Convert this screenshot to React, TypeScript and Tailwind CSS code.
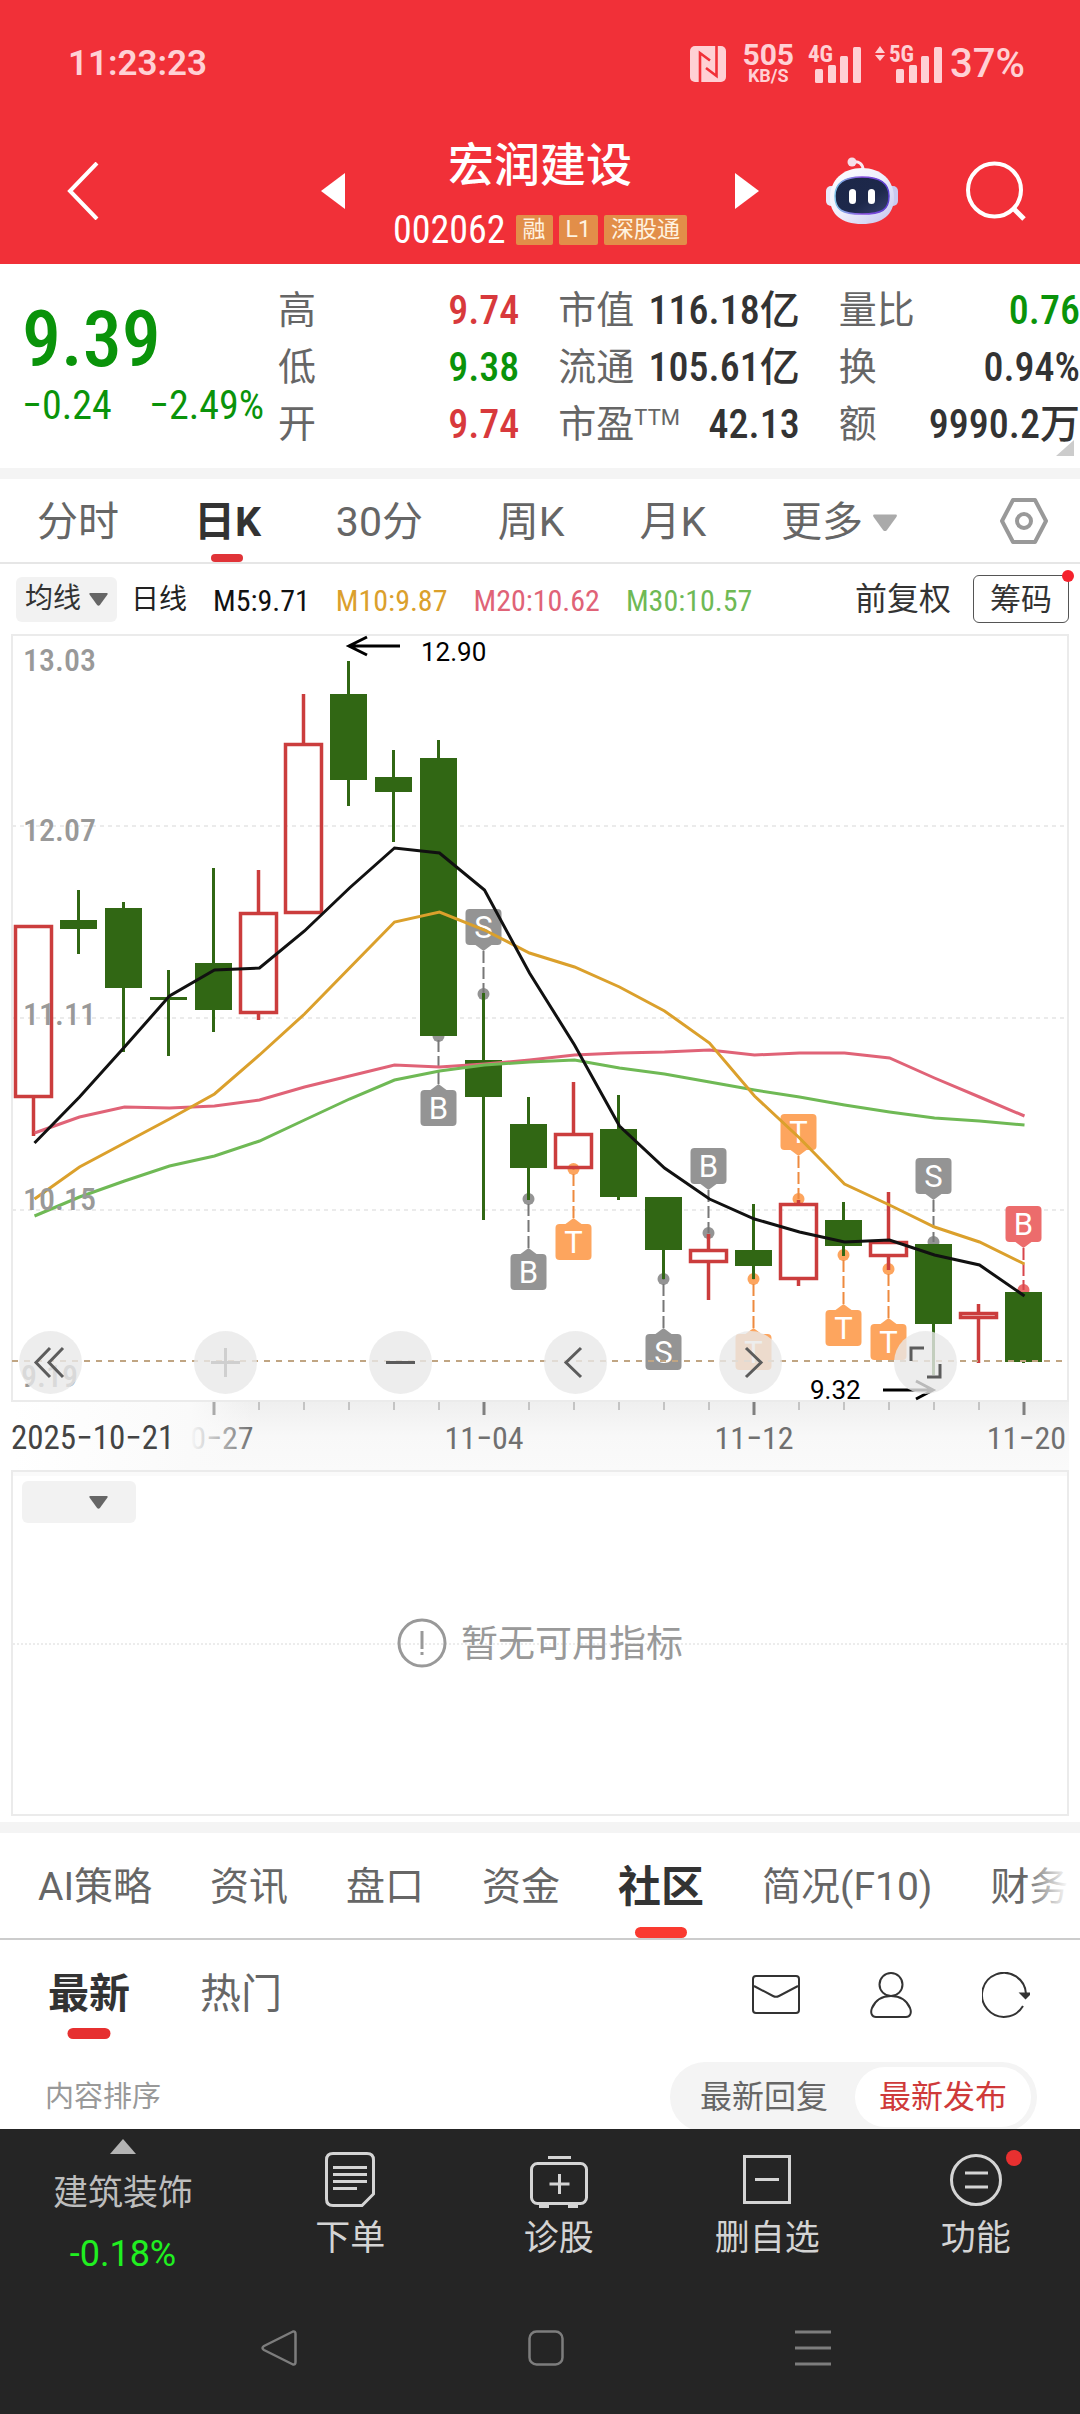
import type { ReactNode } from "react";

const NUM = "font-['Roboto_Condensed','Noto_Sans_CJK_SC',sans-serif]";

const UP = "#cb3d3d";
const DOWN = "#316714";

type Candle = { up?: boolean; high: number; top: number; bottom: number; low: number };

const candles: Candle[] = [
  { up: true, high: 925, top: 925, bottom: 1098, low: 1136 },
  { high: 890, top: 920, bottom: 929, low: 954 },
  { high: 902, top: 908, bottom: 988, low: 1052 },
  { high: 970, top: 997, bottom: 1000, low: 1056 },
  { high: 868, top: 963, bottom: 1010, low: 1032 },
  { up: true, high: 870, top: 912, bottom: 1014, low: 1020 },
  { up: true, high: 694, top: 743, bottom: 914, low: 914 },
  { high: 661, top: 694, bottom: 780, low: 806 },
  { high: 750, top: 777, bottom: 792, low: 842 },
  { high: 740, top: 758, bottom: 1036, low: 1036 },
  { high: 993, top: 1060, bottom: 1097, low: 1220 },
  { high: 1097, top: 1124, bottom: 1168, low: 1200 },
  { up: true, high: 1082, top: 1133, bottom: 1169, low: 1169 },
  { high: 1095, top: 1129, bottom: 1197, low: 1200 },
  { high: 1197, top: 1197, bottom: 1250, low: 1279 },
  { up: true, high: 1234, top: 1249, bottom: 1263, low: 1300 },
  { high: 1204, top: 1250, bottom: 1266, low: 1279 },
  { up: true, high: 1200, top: 1203, bottom: 1280, low: 1286 },
  { high: 1202, top: 1220, bottom: 1246, low: 1256 },
  { up: true, high: 1192, top: 1241, bottom: 1257, low: 1270 },
  { high: 1244, top: 1244, bottom: 1324, low: 1375 },
  { up: true, high: 1304, top: 1312, bottom: 1319, low: 1363 },
  { high: 1292, top: 1292, bottom: 1362, low: 1363 },
];

const averages = [
  { color: "#e06377", y: [1133, 1117, 1107, 1108, 1106, 1100, 1087, 1076, 1065, 1067, 1064, 1060, 1055, 1053, 1052, 1050, 1055, 1053, 1053, 1058, 1078, 1097, 1116] },
  { color: "#6fb955", y: [1216, 1197, 1181, 1166, 1156, 1141, 1120, 1099, 1080, 1071, 1065, 1062, 1060, 1068, 1074, 1082, 1090, 1097, 1105, 1112, 1118, 1121, 1125] },
  { color: "#dba02c", y: [1199, 1167, 1143, 1119, 1094, 1055, 1014, 968, 922, 912, 930, 953, 967, 987, 1011, 1043, 1096, 1138, 1184, 1205, 1227, 1242, 1264] },
  { color: "#111111", y: [1143, 1097, 1047, 996, 970, 968, 931, 888, 848, 853, 890, 973, 1045, 1126, 1168, 1199, 1219, 1232, 1242, 1240, 1255, 1265, 1296] },
];

const GREY = { box: "#949494", line: "#777777" };
const ORANGE = { box: "#fda55e", line: "#ee8a3f" };
const RED = { box: "#ec6c6c", line: "#d8454b" };

const markers = [
  { i: 10, text: "S", top: 909, dot: 994, tone: GREY },
  { i: 9, text: "B", top: 1090, dot: 1036, tone: GREY },
  { i: 11, text: "B", top: 1254, dot: 1199, tone: GREY },
  { i: 12, text: "T", top: 1224, dot: 1169, tone: ORANGE },
  { i: 14, text: "S", top: 1334, dot: 1279, tone: GREY },
  { i: 15, text: "B", top: 1148, dot: 1233, tone: GREY },
  { i: 16, text: "T", top: 1334, dot: 1279, tone: ORANGE },
  { i: 17, text: "T", top: 1114, dot: 1199, tone: ORANGE },
  { i: 18, text: "T", top: 1310, dot: 1255, tone: ORANGE },
  { i: 19, text: "T", top: 1324, dot: 1269, tone: ORANGE },
  { i: 20, text: "S", top: 1158, dot: 1242, tone: GREY },
  { i: 22, text: "B", top: 1206, dot: 1290, tone: RED },
];

const cx = (i: number) => 33.5 + i * 45;

function Marker({ i, text, top, dot, tone }: (typeof markers)[number]) {
  const x = cx(i);
  const below = top > dot;
  const edge = below ? top : top + 36;
  const tip = below ? edge - 6 : edge + 6;
  return (
    <g>
      <circle cx={x} cy={dot} r={6} fill={tone.box} />
      <line x1={x} x2={x} y1={tip} y2={dot} stroke={tone.line} strokeWidth={2} strokeDasharray="12 4" />
      <path d={`M${x - 8} ${edge}L${x} ${tip}L${x + 8} ${edge}Z`} fill={tone.box} />
      <rect x={x - 18} y={top} width={36} height={36} rx={4} fill={tone.box} />
      <text x={x} y={top + 29} textAnchor="middle" fill="#fff" className="font-['Roboto'] text-[31px]">
        {text}
      </text>
    </g>
  );
}

function CandleShape({ i, c }: { i: number; c: Candle }) {
  const x = cx(i);
  if (!c.up) {
    return (
      <g fill={DOWN}>
        <rect x={x - 1.5} y={c.high} width={3} height={c.low - c.high} />
        <rect x={x - 18.5} y={c.top} width={37} height={c.bottom - c.top} />
      </g>
    );
  }
  return (
    <g stroke={UP} strokeWidth={3.5}>
      <line x1={x} x2={x} y1={c.high} y2={c.top} />
      <line x1={x} x2={x} y1={c.bottom} y2={c.low} />
      <rect x={x - 18} y={c.top + 1.5} width={36} height={c.bottom - c.top - 3} fill="none" />
    </g>
  );
}

function KlineChart() {
  const label = NUM + " text-[32px]";
  return (
    <svg viewBox="0 634 1080 836" className="block w-full" role="img" aria-label="日K线图">
      <defs>
        <linearGradient id="axisFade" x1="0" x2="0" y1="0" y2="1">
          <stop offset="0" stopColor="#efefef" />
          <stop offset="0.5" stopColor="#f8f8f8" />
          <stop offset="1" stopColor="#fafafa" />
        </linearGradient>
        <linearGradient id="leftFade">
          <stop offset="0" stopColor="#fff" />
          <stop offset="0.74" stopColor="#fafafa" />
          <stop offset="1" stopColor="#fafafa" stopOpacity="0" />
        </linearGradient>
      </defs>
      <rect x={12} y={1402} width={1057} height={68} fill="url(#axisFade)" />
      {[826, 1018, 1210].map((y) => (
        <line key={y} x1={12} x2={1068} y1={y} y2={y} stroke="#ebebeb" strokeWidth={2} strokeDasharray="4 4" />
      ))}
      <rect x={12} y={635} width={1056} height={766} fill="none" stroke="#ebebeb" strokeWidth={2} />

      {markers.map((m) => (
        <Marker key={m.i} {...m} />
      ))}
      {candles.map((c, i) => (
        <CandleShape key={i} i={i} c={c} />
      ))}
      {averages.map((a) => (
        <polyline
          key={a.color}
          points={a.y.map((y, i) => `${cx(i) + 1},${y}`).join(" ")}
          fill="none"
          stroke={a.color}
          strokeWidth={3}
        />
      ))}
      <line x1={12} x2={1068} y1={1361} y2={1361} stroke="#c0a583" strokeWidth={2} strokeDasharray="6 6" />

      <g fill="#999" className={NUM + " text-[32px] font-medium"}>
        <text x={23} y={671}>13.03</text>
        <text x={23} y={841}>12.07</text>
        <text x={23} y={1025}>11.11</text>
        <text x={23} y={1210}>10.15</text>
        <text x={21} y={1387}>9.19</text>
      </g>

      <g stroke="#000" strokeWidth={3} fill="none">
        <path d="M400 646H350M367 637L349 646L367 655" />
        <path d="M883 1390H933M916 1381L933 1390L916 1399" />
      </g>
      <text x={421} y={661} className="font-['Roboto'] text-[26px]">12.90</text>
      <text x={810} y={1399} className="font-['Roboto'] text-[26px]">9.32</text>

      <g fill="#707070" className={label}>
        <text x={214} y={1449} textAnchor="middle">10−27</text>
        <rect x={12} y={1402} width={240} height={68} fill="url(#leftFade)" />
        <text x={484} y={1449} textAnchor="middle">11−04</text>
        <text x={754} y={1449} textAnchor="middle">11−12</text>
        <text x={1066} y={1449} textAnchor="end">11−20</text>
        <text x={11} y={1449} fill="#444" className="text-[33px]">2025−10−21</text>
      </g>
      {candles.map((_, i) =>
        i < 4 ? null : (
          <line
            key={i}
            x1={cx(i) + 0.5}
            x2={cx(i) + 0.5}
            y1={1402}
            y2={i % 6 === 4 ? 1415 : 1410}
            stroke={i % 6 === 4 ? (i === 4 ? "#aaa" : "#808080") : "#c4c4c4"}
            strokeWidth={i % 6 === 4 ? 3 : 2}
          />
        ),
      )}
    </svg>
  );
}

function RoundButton({ label, children }: { label: string; children: ReactNode }) {
  return (
    <button aria-label={label} className="size-[63px] rounded-full bg-[#e8e8e8]/80">
      <svg viewBox="0 0 63 63" className="size-full" fill="none" stroke="#5c5c5c" strokeWidth={3}>
        {children}
      </svg>
    </button>
  );
}

function Down({ className }: { className: string }) {
  return (
    <svg viewBox="0 0 20 14" className={className} fill="currentColor" aria-hidden="true">
      <path d="M1 0H19Q20.500 0 19.500 2L11.500 13Q10 14.500 8.500 13L0.500 2Q-0.500 0 1 0Z" />
    </svg>
  );
}

function Signal({ label, arrows }: { label: string; arrows?: boolean }) {
  return (
    <svg viewBox={arrows ? "0 -10 67 58" : "0 -10 53 58"} className={arrows ? "h-[58px] w-[67px]" : "h-[58px] w-[53px]"} fill="currentColor">
      {arrows && <path d="M0 8L5 1L10 8ZM0 10H10L5 16Z" />}
      <text x={arrows ? 14 : 0} y={17} className="font-['Roboto_Condensed'] text-[23px] font-bold">
        {label}
      </text>
      {[
        [0, 24],
        [13, 20],
        [25, 11],
        [38, 2],
      ].map(([x, y]) => (
        <rect key={x} x={x + (arrows ? 21 : 7)} y={y} width={8} height={38 - y} rx={1.5} />
      ))}
    </svg>
  );
}

function Robot() {
  return (
    <svg viewBox="0 0 72 68" className="h-[68px] w-[72px]" aria-hidden="true">
      <defs>
        <linearGradient id="shell" x1="0" y1="0" x2="1" y2="1">
          <stop offset="0" stopColor="#ffffff" />
          <stop offset="0.5" stopColor="#eeeefc" />
          <stop offset="1" stopColor="#c3c4ee" />
        </linearGradient>
        <linearGradient id="rim">
          <stop offset="0" stopColor="#7fc4e8" />
          <stop offset="0.5" stopColor="#8a4fe0" />
          <stop offset="1" stopColor="#5a3fd0" />
        </linearGradient>
        <linearGradient id="visor" x1="0" y1="0" x2="1" y2="1">
          <stop offset="0" stopColor="#1c2748" />
          <stop offset="0.6" stopColor="#1d284b" />
          <stop offset="1" stopColor="#37426e" />
        </linearGradient>
      </defs>
      <path d="M27 5C33 4 37 7 37 13" fill="none" stroke="#fbeaf2" strokeWidth={3} />
      <circle cx={26} cy={5} r={4.5} fill="#f6dfe9" />
      <rect x={0} y={29} width={12} height={20} rx={5} fill="#e9e9fa" />
      <rect x={60} y={29} width={12} height={20} rx={5} fill="#c9c9f0" />
      <path d="M36 11C55 11 68 23 68 41C68 57 57 67 36 67C15 67 4 57 4 41C4 23 17 11 36 11Z" fill="url(#shell)" />
      <path d="M36 20C53 20 63 25 63 39C63 53 56 57 36 57C16 57 9 53 9 39C9 25 19 20 36 20Z" fill="url(#visor)" stroke="url(#rim)" strokeWidth={1.5} />
      <rect x={23} y={32} width={7} height={15} rx={3.500} fill="#fff" />
      <rect x={42} y={32} width={7} height={15} rx={3.500} fill="#fff" />
    </svg>
  );
}

const quotes = [
  [
    ["高", "9.74", "text-[#d8393c]"],
    ["低", "9.38", "text-[#0a930a]"],
    ["开", "9.74", "text-[#d8393c]"],
  ],
  [
    ["市值", "116.18亿", "text-[#333]"],
    ["流通", "105.61亿", "text-[#333]"],
    ["市盈", "42.13", "text-[#333]"],
  ],
  [
    ["量比", "0.76", "text-[#0a930a]"],
    ["换", "0.94%", "text-[#333]"],
    ["额", "9990.2万", "text-[#333]"],
  ],
];

function Tag({ children }: { children: ReactNode }) {
  return <span className="flex h-[30px] items-center rounded-xs bg-[#e28e49] px-[7px] text-[23px] text-[#fff3e0]">{children}</span>;
}

function NavItem({ label, children }: { label: string; children: ReactNode }) {
  return (
    <button className="flex flex-1 flex-col items-center pt-[22px]">
      <span className="relative flex h-[58px] items-center">{children}</span>
      <span className="text-[35px] leading-[60px]">{label}</span>
    </button>
  );
}

export default function App() {
  return (
    <div className="flex h-screen flex-col overflow-hidden bg-white font-['Roboto','Noto_Sans_CJK_SC',sans-serif] text-[#333]">
      <header className="shrink-0 bg-[#f13038] text-white">
        <div className="flex h-[124px] items-center justify-between pt-1 pr-[55px] pl-[68px] text-[#ffd0d4]">
          <span className="text-[35px] font-semibold">11:23:23</span>
          <div className="flex items-center">
            <svg viewBox="0 0 36 36" className="mr-4 size-9" aria-label="NFC">
              <rect width={36} height={36} rx={5} fill="currentColor" />
              <path d="M10 36V7L20 14.500M26.500 0V30L16 22" fill="none" stroke="#f13038" strokeWidth={2.600} />
            </svg>
            <span className="mr-[14px] flex flex-col items-center font-bold">
              <span className="text-[30px] leading-6">505</span>
              <span className="text-[18px] leading-[18px]">KB/S</span>
            </span>
            <span className="mr-[14px] flex">
              <Signal label="4G" />
            </span>
            <span className="mr-2 flex">
              <Signal label="5G" arrows />
            </span>
            <span className="text-[40px] font-medium">37%</span>
          </div>
        </div>
        <div className="grid h-[140px] grid-cols-[1fr_438px_1fr] items-center pb-2">
          <button aria-label="返回" className="w-fit pl-[67px]">
            <svg viewBox="0 0 32 58" className="h-[58px] w-8" fill="none" stroke="#fff" strokeWidth={4}>
              <path d="M30 1L3 29L30 57" />
            </svg>
          </button>
          <div className="flex items-center justify-between">
            <button aria-label="上一只">
              <svg viewBox="0 0 24 36" className="h-9 w-6" fill="#fff">
                <path d="M24 0V36L0 18Z" />
              </svg>
            </button>
            <div className="flex flex-col items-center">
              <h1 className="pt-1 text-[46px] leading-[74px] font-medium">宏润建设</h1>
              <div className="flex h-14 items-center gap-[6px]">
                <span className={`${NUM} mr-1 text-[38px]`}>002062</span>
                <Tag>融</Tag>
                <Tag>L1</Tag>
                <Tag>深股通</Tag>
              </div>
            </div>
            <button aria-label="下一只">
              <svg viewBox="0 0 24 36" className="h-9 w-6" fill="#fff">
                <path d="M0 0V36L24 18Z" />
              </svg>
            </button>
          </div>
          <div className="flex items-center justify-end gap-[68px] pr-[54px]">
            <button aria-label="智能助手">
              <Robot />
            </button>
            <button aria-label="搜索">
              <svg viewBox="0 0 60 60" className="size-[60px]" fill="none" stroke="#fff" strokeWidth={4}>
                <circle cx={28.500} cy={29} r={26.500} />
                <path d="M47 47L58 58" strokeWidth={5} />
              </svg>
            </button>
          </div>
        </div>
      </header>

      <main className="min-h-0 flex-1 overflow-hidden">
        <section className="relative flex h-[204px] pt-[18px]">
          <div className={`${NUM} w-[278px] shrink-0 pl-[22px] text-[#0a930a]`}>
            <p className="pt-3 text-[78px] leading-[92px] font-medium">9.39</p>
            <p className="flex justify-between pr-[14px] text-[40px] leading-10">
              <span>−0.24</span>
              <span>−2.49%</span>
            </p>
          </div>
          <div className="grid flex-1 grid-cols-3 gap-x-[39px]">
            {quotes.map((column, c) => (
              <dl key={c}>
                {column.map(([name, value, tone]) => (
                  <div key={name} className="flex h-[57px] items-center justify-between whitespace-nowrap">
                    <dt className="flex text-[38px] text-[#666]">
                      {name}
                      {name === "市盈" && <sup className="top-0 pt-[10px] text-[22px] leading-6">TTM</sup>}
                    </dt>
                    <dd className={`${NUM} text-[40px] font-medium ${tone}`}>{value}</dd>
                  </div>
                ))}
              </dl>
            ))}
          </div>
          <svg viewBox="0 0 18 16" className="absolute right-[6px] bottom-3 h-4 w-[18px]" fill="#ccc">
            <path d="M18 0V16H0Z" />
          </svg>
        </section>
        <div className="h-[11px] bg-[#f4f4f4]" />

        <nav className="flex h-[85px] items-center justify-between border-b-2 border-[#e6e6e6] pr-8 pl-[37px] text-[41px] text-[#666]">
          <button className="pt-1">分时</button>
          <button className="relative flex h-full items-center pt-1 font-bold text-[#333]">
            日K
            <span className="absolute bottom-0 left-1/2 h-2 w-8 -translate-x-1/2 rounded-full bg-[#e03338]" />
          </button>
          <button className="pt-1">30分</button>
          <button className="pt-1">周K</button>
          <button className="pt-1">月K</button>
          <button className="flex items-center gap-[10px] pt-1">
            更多
            <Down className="h-[18px] w-6 text-[#aaa]" />
          </button>
          <button aria-label="设置" className="pl-7">
            <svg viewBox="0 0 48 46" className="h-[46px] w-12" fill="none" stroke="#999" strokeWidth={4} strokeLinejoin="round">
              <path d="M13 2H35L46 23L35 44H13L2 23Z" />
              <circle cx={24} cy={23} r={7} />
            </svg>
          </button>
        </nav>

        <div className="flex h-[70px] items-center pr-[11px] pl-4 whitespace-nowrap">
          <button className="mr-[14px] flex h-[45px] items-center gap-[8px] rounded-md bg-[#f2f2f2] px-[9px] text-[28px]">
            均线
            <Down className="h-[13px] w-[19px] text-[#666]" />
          </button>
          <span className="mr-[26px] pt-[2px] text-[28px] text-[#222]">日线</span>
          <div className={`${NUM} flex gap-[26px] pt-[2px] text-[30px]`}>
            <span className="text-[#111]">M5:9.71</span>
            <span className="text-[#dba02c]">M10:9.87</span>
            <span className="text-[#e06377]">M20:10.62</span>
            <span className="text-[#6fb955]">M30:10.57</span>
          </div>
          <button className="mr-[22px] ml-auto text-[32px]">前复权</button>
          <button className="relative h-12 rounded-md border border-[#555] px-4 text-[31px] leading-none">
            筹码
            <span className="absolute -top-[6px] -right-[6px] size-3 rounded-full bg-[#f5222d]" />
          </button>
        </div>

        <section className="relative">
          <KlineChart />
          <div className="absolute inset-x-0 bottom-[76px] flex justify-between pr-[123px] pl-[19px]">
            <RoundButton label="最左">
              <path d="M31 17L17 31.500L31 46M44 17L30 31.500L44 46" />
            </RoundButton>
            <RoundButton label="放大">
              <path d="M31.500 17V46M17 31.500H46" stroke="#cfcfcf" />
            </RoundButton>
            <RoundButton label="缩小">
              <path d="M17 31.500H46" />
            </RoundButton>
            <RoundButton label="左移">
              <path d="M37 17L22 31.500L37 46" />
            </RoundButton>
            <RoundButton label="右移">
              <path d="M27 17L42 31.500L27 46" />
            </RoundButton>
            <RoundButton label="全屏">
              <path d="M30 17H17V30M33 46H46V33" />
            </RoundButton>
          </div>
        </section>

        <section className="relative mx-[11px] flex h-[346px] items-center justify-center border-2 border-[#ebebeb]">
          <div className="absolute inset-x-0 top-0 h-1 bg-[#fafafa]" />
          <div className="absolute inset-x-0 top-1/2 border-t-2 border-dotted border-[#ececec]" />
          <button aria-label="选择指标" className="absolute top-[9px] left-[9px] flex h-[42px] w-[114px] items-center justify-end rounded-md bg-[#f2f2f2] pr-7">
            <Down className="h-[13px] w-[19px] text-[#666]" />
          </button>
          <p className="relative flex items-center gap-[14px] text-[37px] text-[#999]">
            <svg viewBox="0 0 50 50" className="size-[50px]" fill="none" stroke="currentColor" strokeWidth={3}>
              <circle cx={25} cy={25} r={23} />
              <path d="M25 13V31M25 34V37" />
            </svg>
            <span className="pt-1">暂无可用指标</span>
          </p>
        </section>
        <div className="mt-[6px] h-[11px] bg-[#f4f4f4]" />

        <nav className="relative flex h-[107px] items-center gap-[58px] overflow-hidden border-b-2 border-[#ccc] pl-[38px] text-[39px] whitespace-nowrap text-[#666]">
          <button className="pt-1">AI策略</button>
          <button className="pt-1">资讯</button>
          <button className="pt-1">盘口</button>
          <button className="pt-1">资金</button>
          <button className="relative flex h-full items-center pt-1 text-[43px] font-bold text-[#333]">
            社区
            <span className="absolute bottom-0 left-1/2 h-[11px] w-[52px] -translate-x-1/2 rounded-full bg-[#fa3a30]" />
          </button>
          <button className="pt-1">简况(F10)</button>
          <button className="pt-1">财务</button>
          <div className="absolute inset-y-0 right-0 w-14 bg-linear-to-r from-white/0 to-white to-80%" />
        </nav>

        <div className="flex h-[110px] items-center gap-[70px] pr-[50px] pl-12 text-[41px]">
          <button className="relative flex h-full items-center font-bold">
            最新
            <span className="absolute bottom-[11px] left-1/2 h-[11px] w-[43px] -translate-x-1/2 rounded-full bg-[#e63030]" />
          </button>
          <button className="mr-auto text-[#666]">热门</button>
          <button aria-label="消息">
            <svg viewBox="0 0 48 46" className="h-[46px] w-12" fill="none" stroke="#333" strokeWidth={2}>
              <rect x={1} y={4} width={46} height={37} rx={3} />
              <path d="M2 14L21 24Q24 25.500 27 24L46 14" />
            </svg>
          </button>
          <button aria-label="我的">
            <svg viewBox="0 0 42 46" className="h-[46px] w-[42px]" fill="none" stroke="#333" strokeWidth={2}>
              <circle cx={21} cy={12.500} r={11.500} />
              <path d="M21 24C31 24 37 29 40 36C42 41 40 45 36 45H6C2 45 0 41 2 36C5 29 11 24 21 24Z" />
            </svg>
          </button>
          <button aria-label="刷新">
            <svg viewBox="0 0 48 46" className="h-[46px] w-12" fill="none" stroke="#333" strokeWidth={2}>
              <path d="M44 22A22 22 0 1 0 41 34" />
              <path d="M39 21.500H48L43.500 26Z" fill="#333" />
            </svg>
          </button>
        </div>

        <div className="flex items-center justify-between pt-3 pr-[43px] pl-[45px]">
          <span className="pt-[2px] text-[29px] text-[#999]">内容排序</span>
          <div className="flex h-[70px] items-center rounded-full bg-[#f4f4f4] pr-[6px] text-[32px]">
            <button className="px-[27px] pl-[30px] text-[#666]">最新回复</button>
            <button className="h-[60px] rounded-full bg-white px-6 text-[#cf3a3a]">最新发布</button>
          </div>
        </div>
      </main>

      <footer className="shrink-0 bg-[#252525] text-[#d4d4d4]">
        <nav className="flex h-[168px]">
          <button className="flex w-[246px] flex-col items-center pt-[10px]">
            <svg viewBox="0 0 26 15" className="h-[15px] w-[26px]" fill="#b4b4b4">
              <path d="M13 0L26 15H0Z" />
            </svg>
            <span className="mt-[10px] text-[35px] leading-[60px] text-[#bdbdbd]">建筑装饰</span>
            <span className="text-4xl leading-[60px] text-[#20f020]">-0.18%</span>
          </button>
          <NavItem label="下单">
            <svg viewBox="0 0 50 56" className="h-14 w-[50px]" fill="none" stroke="currentColor" strokeWidth={3}>
              <path d="M8 1.500H42Q48.500 1.500 48.500 8V42L37 53.500H8Q1.500 53.500 1.500 47V8Q1.500 1.500 8 1.500Z" />
              <path d="M8 15.500H42M8 22.500H42M8 29.500H42M8 36.500H32" />
            </svg>
          </NavItem>
          <NavItem label="诊股">
            <svg viewBox="0 0 58 56" className="h-14 w-[58px]" fill="none" stroke="currentColor" strokeWidth={3}>
              <rect x={1.500} y={11.500} width={55} height={40} rx={6} />
              <path d="M18 5.500H41M19.500 32H39.500M29.500 22V42" />
              <path d="M9 54H19M38 54H48" strokeWidth={4} />
            </svg>
          </NavItem>
          <NavItem label="删自选">
            <svg viewBox="0 0 48 50" className="h-[50px] w-12" fill="none" stroke="currentColor" strokeWidth={3}>
              <rect x={1.500} y={1.500} width={45} height={46} />
              <path d="M12 24.500H36" />
            </svg>
          </NavItem>
          <NavItem label="功能">
            <svg viewBox="0 0 52 52" className="size-[52px]" fill="none" stroke="currentColor" strokeWidth={3}>
              <circle cx={26} cy={26} r={24.500} />
              <path d="M15 19H38M15 33H38" />
            </svg>
            <span className="absolute -top-[1px] -right-5 size-4 rounded-full bg-[#e83030]" />
          </NavItem>
        </nav>
        <div className="flex h-[117px] items-center justify-between pr-[249px] pb-4 pl-[261px] text-[#7d7d7d]">
          <button aria-label="后退">
            <svg viewBox="0 0 36 36" className="size-9" fill="none" stroke="currentColor" strokeWidth={2.500} strokeLinejoin="round">
              <path d="M32 1.500L3 16Q0 18 3 20L32 34.500Q34.500 35 34.500 32V4Q34.500 1 32 1.500Z" />
            </svg>
          </button>
          <button aria-label="主屏幕">
            <svg viewBox="0 0 36 36" className="size-9" fill="none" stroke="currentColor" strokeWidth={2.500}>
              <rect x={1.500} y={1.500} width={33} height={33} rx={7} />
            </svg>
          </button>
          <button aria-label="最近任务">
            <svg viewBox="0 0 36 36" className="size-9" fill="none" stroke="currentColor" strokeWidth={3}>
              <path d="M0 2H36M0 18H36M0 34H36" />
            </svg>
          </button>
        </div>
      </footer>
    </div>
  );
}
